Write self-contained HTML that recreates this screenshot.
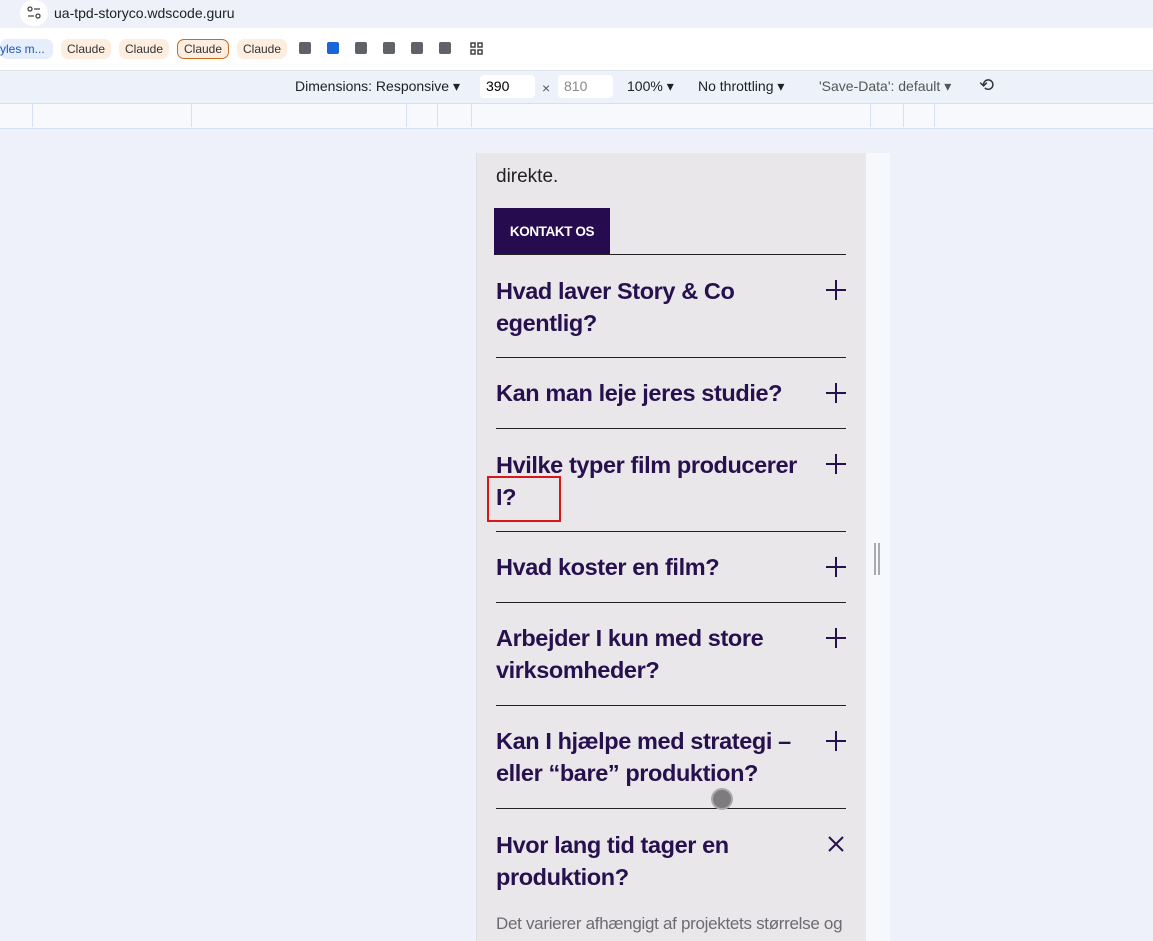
<!DOCTYPE html>
<html><head><meta charset="utf-8"><style>
*{margin:0;padding:0;box-sizing:border-box}
html{width:1153px;height:941px;overflow:hidden}
body{width:1153px;height:941px;overflow:hidden;background:#eef1f9;font-family:"Liberation Sans",sans-serif;position:relative}
.abs{position:absolute}
.top{left:0;top:0;width:1153px;height:28px;background:#eef1f9}
.bm{left:0;top:28px;width:1153px;height:42px;background:#fff}
.chip{top:39px;height:20px;border-radius:7px;background:#fdeee0;font-size:12px;color:#333;line-height:20px;text-align:center}
.sq{top:42px;width:12px;height:12px;border-radius:2px;background:#5f6368}
.dt{left:0;top:70px;width:1153px;height:33px;background:#edf1fa;border-top:1px solid #dfe3ea}
.ruler{left:0;top:103px;width:1153px;height:26px;background:#f7f9fd;border-top:1px solid #d5e0f5;border-bottom:1px solid #d5e0f5}
.rl{top:104px;width:1px;height:23px;background:#d5e0f5}
.t{font-size:14px;color:#202124;top:78px}
.page{left:476px;top:153px;width:390px;height:788px;background:#eae7ea;border-left:1px solid #dcdfe6;overflow:hidden}
.scr{left:866px;top:153px;width:24px;height:788px;background:#f7f8fc}
.h{left:496px;width:310px;font-size:23.5px;font-weight:bold;color:#26104e;line-height:32px;letter-spacing:-0.4px}
.line{left:496px;width:350px;height:1px;background:#222}
.plus{left:826px;width:20px;height:20px}
</style></head><body>
<div class="abs top"></div>
<div class="abs" style="left:20px;top:0;width:28px;height:26px;border-radius:13px;background:#fff"></div>
<svg class="abs" style="left:27px;top:6px;width:14px;height:14px" viewBox="0 0 14 14"><circle cx="3" cy="3" r="2" fill="none" stroke="#444" stroke-width="1.3"/><path d="M7 3H13M1 10H7" stroke="#444" stroke-width="1.3"/><circle cx="11" cy="10" r="2" fill="none" stroke="#444" stroke-width="1.3"/></svg>
<div class="abs" style="left:54px;top:5px;font-size:14px;color:#202124">ua-tpd-storyco.wdscode.guru</div>
<div class="abs bm"></div>
<div class="abs" style="left:0;top:39px;width:53px;height:20px;background:#e6eefc;border-radius:7px;font-size:12px;color:#1a56c4;line-height:20px">yles m...</div>
<div class="abs chip" style="left:61px;width:50px">Claude</div>
<div class="abs chip" style="left:119px;width:50px">Claude</div>
<div class="abs chip" style="left:177px;width:52px;border:1px solid #c96a1a;line-height:18px">Claude</div>
<div class="abs chip" style="left:237px;width:50px">Claude</div>
<div class="abs sq" style="left:299px"></div>
<div class="abs sq" style="left:327px;background:#1a66d9"></div>
<div class="abs sq" style="left:355px"></div>
<div class="abs sq" style="left:383px"></div>
<div class="abs sq" style="left:411px"></div>
<div class="abs sq" style="left:439px"></div>
<svg class="abs" style="left:470px;top:42px;width:13px;height:13px" viewBox="0 0 13 13"><g fill="none" stroke="#444" stroke-width="1.5"><rect x="1" y="1" width="4" height="4"/><rect x="8" y="1" width="4" height="4"/><rect x="1" y="8" width="4" height="4"/><rect x="8" y="8" width="4" height="4"/></g></svg>
<div class="abs dt"></div>
<div class="abs t" style="left:295px">Dimensions: Responsive ▾</div>
<div class="abs" style="left:480px;top:75px;width:55px;height:23px;background:#fff;border-radius:4px;font-size:14px;padding:3px 6px">390</div>
<div class="abs t" style="left:542px;top:80px;color:#555">×</div>
<div class="abs" style="left:558px;top:75px;width:55px;height:23px;background:#fff;border-radius:4px;font-size:14px;padding:3px 6px;color:#888">810</div>
<div class="abs t" style="left:627px">100% ▾</div>
<div class="abs t" style="left:698px">No throttling ▾</div>
<div class="abs t" style="left:819px;color:#555">'Save-Data': default ▾</div>
<div class="abs" style="left:979px;top:75px;font-size:18px;color:#333">⟲</div>
<div class="abs ruler"></div>
<div class="abs rl" style="left:32px"></div><div class="abs rl" style="left:191px"></div>
<div class="abs rl" style="left:406px"></div><div class="abs rl" style="left:437px"></div>
<div class="abs rl" style="left:471px"></div><div class="abs rl" style="left:870px"></div>
<div class="abs rl" style="left:903px"></div><div class="abs rl" style="left:934px"></div>
<div class="abs page">
<div class="abs" style="left:19px;top:758px;width:360px;font-size:17px;color:#6e6a72;line-height:26px;letter-spacing:-0.3px">Det varierer afhængigt af projektets størrelse og kompleksitet. En typisk produktion tager mellem</div>
</div>
<div class="abs scr"></div>
<div class="abs" style="left:874px;top:543px;width:2px;height:32px;background:#aaa;box-shadow:4px 0 0 #aaa"></div>
<div class="abs" style="left:496px;top:166px;font-size:19px;color:#222">direkte.</div>
<div class="abs" style="left:494px;top:208px;width:116px;height:47px;background:#260c4f;color:#fff;font-weight:bold;font-size:13.5px;line-height:47px;text-align:center;letter-spacing:-0.4px">KONTAKT OS</div>
<div class="abs line" style="top:254px"></div>
<div class="abs h" style="top:275px">Hvad laver Story &amp; Co egentlig?</div>
<div class="abs line" style="top:357px"></div>
<div class="abs h" style="top:377px">Kan man leje jeres studie?</div>
<div class="abs line" style="top:428px"></div>
<div class="abs h" style="top:449px">Hvilke typer film producerer I?</div>
<div class="abs" style="left:487px;top:476px;width:74px;height:46px;border:2px solid #d81818"></div>
<div class="abs line" style="top:531px"></div>
<div class="abs h" style="top:551px">Hvad koster en film?</div>
<div class="abs line" style="top:602px"></div>
<div class="abs h" style="top:622px">Arbejder I kun med store virksomheder?</div>
<div class="abs line" style="top:705px"></div>
<div class="abs h" style="top:725px">Kan I hjælpe med strategi – eller “bare” produktion?</div>
<div class="abs line" style="top:808px"></div>
<div class="abs" style="left:711px;top:788px;width:22px;height:22px;border-radius:50%;background:#7d7a80;border:2px solid #aaa"></div>
<div class="abs h" style="top:829px">Hvor lang tid tager en produktion?</div>
<svg class="abs plus" style="top:280px" viewBox="0 0 20 20"><path d="M10 0V20M0 10H20" stroke="#26104e" stroke-width="2"/></svg>
<svg class="abs plus" style="top:383px" viewBox="0 0 20 20"><path d="M10 0V20M0 10H20" stroke="#26104e" stroke-width="2"/></svg>
<svg class="abs plus" style="top:454px" viewBox="0 0 20 20"><path d="M10 0V20M0 10H20" stroke="#26104e" stroke-width="2"/></svg>
<svg class="abs plus" style="top:557px" viewBox="0 0 20 20"><path d="M10 0V20M0 10H20" stroke="#26104e" stroke-width="2"/></svg>
<svg class="abs plus" style="top:628px" viewBox="0 0 20 20"><path d="M10 0V20M0 10H20" stroke="#26104e" stroke-width="2"/></svg>
<svg class="abs plus" style="top:731px" viewBox="0 0 20 20"><path d="M10 0V20M0 10H20" stroke="#26104e" stroke-width="2"/></svg>
<svg class="abs" style="left:828px;top:836px;width:16px;height:16px" viewBox="0 0 16 16"><path d="M1 1L15 15M15 1L1 15" stroke="#26104e" stroke-width="2"/></svg>
</body></html>
